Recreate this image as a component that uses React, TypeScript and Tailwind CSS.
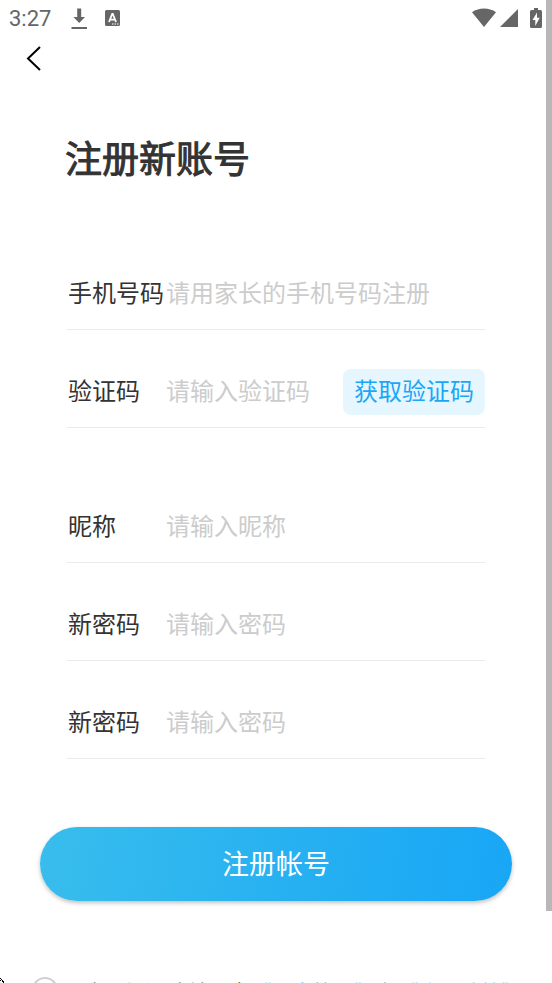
import { useId } from 'react';

type FieldProps = {
    label: string;
    placeholder: string;
    type?: string;
    action?: string;
    className?: string;
};

const fontStack = "font-['Roboto','Noto_Sans_CJK_SC',sans-serif]";

function StatusBar() {
    return (
        <div className="flex items-center h-9 pl-[9px] pr-1 text-[#666666]">
            <span className="text-[22px] leading-6 pt-px">3:27</span>
            <svg className="ml-5" width="16" height="22" viewBox="0 0 16 22" fill="currentColor">
                <path d="M6.200 1.500h4V10H14l-5.800 6-5.800-6h3.800z" />
                <path d="M.5 20h15.500v2H.5z" />
            </svg>
            <svg className="ml-[18px] mt-px" width="15" height="17" viewBox="0 0 15 17">
                <rect width="15" height="16" rx="1.5" fill="currentColor" />
                <path d="M4 12 7.200 4h.6L11 12M5.200 9.600h4.600" fill="none" stroke="#fff" strokeWidth="1.8" />
                <path d="M7 13.500h1.500v1H7zM9.500 13.500H11v1H9.500zM12 13.500h1.500v1H12z" fill="#fff" />
            </svg>
            <svg className="ml-auto" width="24" height="20" viewBox="0 0 24 20" fill="currentColor">
                <path d="M0 4.200C7-.6 17-.6 24 4.200L12 19z" />
            </svg>
            <svg className="ml-1" width="18" height="20" viewBox="0 0 18 20" fill="currentColor">
                <path d="M18 1v18H0z" />
            </svg>
            <svg className="ml-3" width="12" height="20" viewBox="0 0 12 20">
                <path d="M4 0h4v2h2.500Q12 2 12 3.500v15q0 1.500-1.500 1.500h-9Q0 20 0 18.500v-15Q0 2 1.500 2H4z" fill="currentColor" />
                <path d="M7 4.500 2.500 12H5.300v6L9.700 9.700H7z" fill="#fff" />
            </svg>
        </div>
    );
}

function Field({ label, placeholder, type = 'text', action, className = '' }: FieldProps) {
    const id = useId();

    return (
        <div className={`flex items-center h-[72px] border-b border-[#ebebeb] ${className}`}>
            <label htmlFor={id} className="w-[99px] pl-px shrink-0 text-[24px] text-[#333333] whitespace-nowrap">
                {label}
            </label>
            <input
                id={id}
                type={type}
                placeholder={placeholder}
                className="flex-1 min-w-0 h-12 text-[24px] text-[#333333] placeholder:text-[#cccccc] outline-none"
            />
            {action && (
                <button type="button" className="h-[46px] px-[11px] shrink-0 rounded-lg bg-[#e5f6ff] text-[24px] text-[#1aa7f5]">
                    {action}
                </button>
            )}
        </div>
    );
}

export default function App() {
    return (
        <div className={`relative h-screen overflow-hidden bg-white ${fontStack}`}>
            <div className="flex">
                <main className="flex-1 min-w-0 pb-[10px]">
                    <StatusBar />
                    <button type="button" aria-label="返回" className="block ml-6 mt-2 w-7 h-7">
                        <svg width="20" height="28" viewBox="0 0 20 28" fill="none" stroke="#000" strokeWidth="2">
                            <path d="M16 3 4 14.500 16 26" />
                        </svg>
                    </button>

                    <form onSubmit={(e) => e.preventDefault()}>
                        <h1 className="pl-[65px] mt-[63px] text-[37px] leading-[52px] font-normal text-[#333333] [-webkit-text-stroke:1px_#333333]">
                            注册新账号
                        </h1>
                        <div className="pl-[67px] pr-[61px]">
                            <Field className="mt-[71px]" label="手机号码" placeholder="请用家长的手机号码注册" type="tel" />
                            <Field className="mt-[26px]" label="验证码" placeholder="请输入验证码" action="获取验证码" />
                            <Field className="mt-[63px]" label="昵称" placeholder="请输入昵称" />
                            <Field className="mt-[26px]" label="新密码" placeholder="请输入密码" type="password" />
                            <Field className="mt-[26px]" label="新密码" placeholder="请输入密码" type="password" />
                        </div>
                        <div className="pl-10 pr-[34px] mt-[68px]">
                            <button
                                type="submit"
                                className="block w-full h-[74px] pt-[3px] rounded-full bg-linear-[100deg,#38bdec,#18a6f6] text-[27px] text-white shadow-[0_2px_4px_rgba(0,0,0,0.25)]"
                            >
                                注册帐号
                            </button>
                        </div>
                    </form>
                </main>
                <div className="w-[6px] bg-[#b8b8b8]" />
            </div>

            <footer className="flex items-start pl-8 pt-[66px] text-[21px] whitespace-nowrap text-[#333333]">
                <input
                    id="agree"
                    type="checkbox"
                    className="appearance-none w-[26px] h-[26px] shrink-0 rounded-full border-2 border-[#d0d0d4]"
                />
                <div className="ml-6 mt-px">
                    <label htmlFor="agree">我已经阅读并同意</label>
                    <a href="#terms" className="text-[#1aa7f5]">《用户协议》</a>
                    和
                    <a href="#privacy" className="text-[#1aa7f5]">《隐私政策》</a>
                </div>
            </footer>

            {/* tip of the mouse pointer */}
            <svg className="absolute left-0 bottom-0" width="5" height="5" viewBox="0 0 5 5" shapeRendering="crispEdges">
                <path d="M0 0h1v1H0zM1 1h1v1H1zM0 2h1v1H0zM2 2h1v1H2zM2 3h2v1H2zM3 4h1v1H3z" fill="#000" />
            </svg>
        </div>
    );
}
